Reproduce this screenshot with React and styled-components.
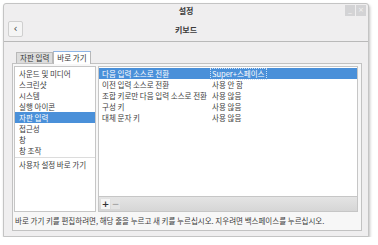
import styled, { createGlobalStyle } from "styled-components";

const GlobalStyle = createGlobalStyle`
  body {
    margin: 0;
    background: #ffffff;
    font-family: "Noto Sans CJK KR", "Noto Sans", sans-serif;
    color: #333333;
  }
`;

const categories = [
  "사운드 및 미디어",
  "스크린샷",
  "시스템",
  "실행 아이콘",
  "자판 입력",
  "접근성",
  "창",
  "창 조작",
];

const shortcuts = [
  { name: "다음 입력 소스로 전환", key: "Super+스페이스", selected: true },
  { name: "이전 입력 소스로 전환", key: "사용 안 함" },
  { name: "조합 키로만 다음 입력 소스로 전환", key: "사용 않음" },
  { name: "구성 키", key: "사용 않음" },
  { name: "대체 문자 키", key: "사용 않음" },
];

function App() {
  return (
    <>
      <GlobalStyle />
      <Window>
        <TitleBar>
          <span />
          <Title>설정</Title>
          <Controls>
            <Control>_</Control>
            <Control>×</Control>
          </Controls>
        </TitleBar>
        <HeaderBar>
          <BackButton>‹</BackButton>
          <Title>키보드</Title>
          <span />
        </HeaderBar>
        <Body>
          <Tabs>
            <Tab>자판 입력</Tab>
            <Tab $active>바로 가기</Tab>
          </Tabs>
          <Frame>
            <Panes>
              <CategoryList>
                {categories.map((c) => (
                  <Category key={c} $selected={c === "자판 입력"}>
                    {c}
                  </Category>
                ))}
                <Divider />
                <Category>사용자 설정 바로 가기</Category>
              </CategoryList>
              <ShortcutPane>
                <ShortcutList>
                  {shortcuts.map((s) => (
                    <ShortcutRow key={s.name} $selected={s.selected}>
                      <ShortcutName>{s.name}</ShortcutName>
                      <ShortcutKey $selected={s.selected}>{s.key}</ShortcutKey>
                    </ShortcutRow>
                  ))}
                </ShortcutList>
                <Toolbar>
                  <ToolButton>+</ToolButton>
                  <ToolButton $disabled>−</ToolButton>
                </Toolbar>
              </ShortcutPane>
            </Panes>
            <Hint>
              바로 가기 키를 편집하려면, 해당 줄을 누르고 새 키를 누르십시오.
              지우려면 백스페이스를 누르십시오.
            </Hint>
          </Frame>
        </Body>
      </Window>
    </>
  );
}

const Window = styled.div`
  margin: 3px 0 0 3px;
  width: 366px;
  height: 234px;
  box-sizing: border-box;
  background: #efeeef;
  border: 1px solid #c4c4c4;
  border-radius: 3px 3px 0 0;
  box-shadow: 1px 2px 3px rgba(0, 0, 0, 0.25);
  display: flex;
  flex-direction: column;
`;

const TitleBar = styled.div`
  height: 13px;
  display: grid;
  grid-template-columns: 1fr auto 1fr;
  align-items: center;
  padding: 0 2px;
`;

const Title = styled.div`
  font-size: 8px;
  font-weight: 700;
  color: #3a3a3a;
  text-align: center;
`;

const Controls = styled.div`
  display: flex;
  justify-content: flex-end;
  gap: 1px;
  align-self: start;
  margin-top: 1px;
`;

const Control = styled.div`
  width: 10px;
  height: 11px;
  background: #d3d3d5;
  color: #f4f4f4;
  font-size: 7px;
  line-height: 11px;
  text-align: center;
  font-family: "DejaVu Sans", sans-serif;
`;

const HeaderBar = styled.div`
  height: 24px;
  display: grid;
  grid-template-columns: 1fr auto 1fr;
  align-items: center;
  padding: 0 4px;
  border-bottom: 1px solid #b9b9b9;
`;

const BackButton = styled.div`
  width: 15px;
  height: 16px;
  box-sizing: border-box;
  border: 1px solid #cfcfcf;
  border-radius: 2px;
  background: #f5f5f5;
  font-size: 10px;
  line-height: 13px;
  text-align: center;
  color: #444;
  font-family: "DejaVu Sans", sans-serif;
`;

const Body = styled.div`
  flex: 1;
  display: flex;
  flex-direction: column;
  padding: 9px 6px 5px 8px;
`;

const Tabs = styled.div`
  display: flex;
  align-items: flex-end;
  padding-left: 4px;
  height: 12px;
`;

const Tab = styled.div`
  font-size: 7.5px;
  line-height: 10px;
  padding: ${(p) => (p.$active ? "1px 3px 1px" : "0 3px")};
  border: 1px solid #b8b8b8;
  border-bottom: none;
  border-top: ${(p) => (p.$active ? "1px solid #8eb5e6" : "1px solid #b8b8b8")};
  background: ${(p) => (p.$active ? "#ffffff" : "#dcdcdc")};
  margin-bottom: ${(p) => (p.$active ? "-1px" : "0")};
  position: relative;
  z-index: ${(p) => (p.$active ? 1 : 0)};
`;

const Frame = styled.div`
  flex: 1;
  display: flex;
  flex-direction: column;
  border: 1px solid #c2c2c2;
  background: #f7f7f7;
  padding: 2px 3px 0 1px;
`;

const Panes = styled.div`
  display: flex;
  gap: 2px;
  height: 146px;
`;

const CategoryList = styled.div`
  width: 82px;
  box-sizing: border-box;
  border: 1px solid #c6c6c6;
  background: #ffffff;
  padding-top: 1px;
`;

const Category = styled.div`
  font-size: 7.5px;
  line-height: 11px;
  height: 11px;
  padding-left: 4px;
  white-space: nowrap;
  background: ${(p) => (p.$selected ? "#4a90d9" : "transparent")};
  color: ${(p) => (p.$selected ? "#ffffff" : "#3c3c3c")};
`;

const Divider = styled.div`
  height: 1px;
  background: #dcdcdc;
  margin: 1px 0 1px;
`;

const ShortcutPane = styled.div`
  flex: 1;
  display: flex;
  flex-direction: column;
  border: 1px solid #c6c6c6;
`;

const ShortcutList = styled.div`
  flex: 1;
  background: #ffffff;
  padding-top: 1px;
  overflow: hidden;
`;

const ShortcutRow = styled.div`
  display: grid;
  grid-template-columns: 112px 1fr;
  height: 11px;
  line-height: 11px;
  font-size: 7.5px;
  background: ${(p) => (p.$selected ? "#4a90d9" : "transparent")};
  color: ${(p) => (p.$selected ? "#ffffff" : "#3c3c3c")};
`;

const ShortcutName = styled.span`
  padding-left: 3px;
  white-space: nowrap;
  overflow: hidden;
`;

const ShortcutKey = styled.span`
  justify-self: start;
  white-space: nowrap;
  padding: 0 1px;
  line-height: 9px;
  margin-top: 1px;
  outline: ${(p) => (p.$selected ? "1px dotted #cfe0f5" : "none")};
`;

const Toolbar = styled.div`
  height: 14px;
  display: flex;
  align-items: center;
  padding-left: 2px;
  gap: 1px;
  border-top: 1px solid #c6c6c6;
  background: linear-gradient(#e4e4e4, #d6d6d6);
`;

const ToolButton = styled.div`
  width: 9px;
  height: 10px;
  font-size: 9px;
  line-height: 10px;
  text-align: center;
  font-weight: 700;
  font-family: "DejaVu Sans", sans-serif;
  background: ${(p) => (p.$disabled ? "#e3e3e3" : "#f5f5f5")};
  color: ${(p) => (p.$disabled ? "#a8a8a8" : "#333")};
`;

const Hint = styled.div`
  font-size: 7.5px;
  line-height: 11px;
  padding: 3px 0 0 1px;
  white-space: nowrap;
  color: #3c3c3c;
`;

export default App;
